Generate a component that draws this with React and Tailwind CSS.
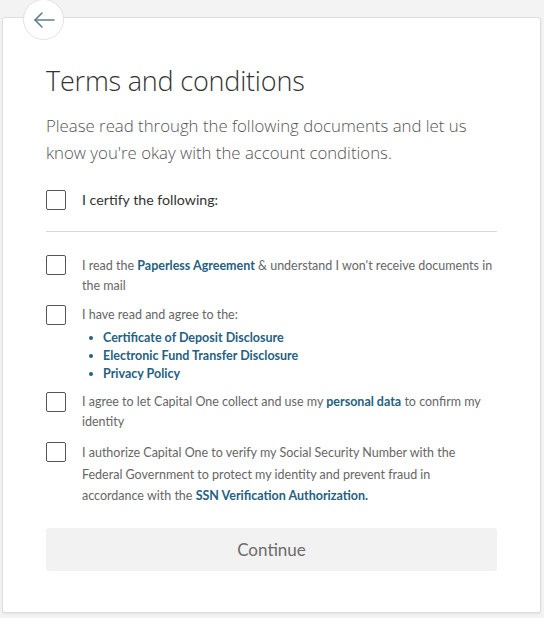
import React from "react";

function Box() {
  return <div className="w-5 h-5 shrink-0 border border-[#555] rounded-[2px] bg-white" />;
}

function L({ children }) {
  return <span className="font-bold text-[#255f82]">{children}</span>;
}

export default function App() {
  return (
    <div className="w-[544px] h-[618px] bg-[#f3f3f3] relative overflow-hidden" style={{ fontFamily: '"Open Sans", "Noto Sans", sans-serif' }}>
      <div className="absolute left-[2px] top-[17px] w-[539px] h-[596px] bg-white border border-[#dedede] rounded-[3px] shadow-[0_1px_2px_rgba(0,0,0,0.08)]">
        <div className="pl-[43px] pr-[43px] pt-[45px]">
          <h1 className="text-[27px] leading-[36px] font-light text-[#333] tracking-[-0.2px]">Terms and conditions</h1>
          <p className="mt-[13px] text-[16.8px] leading-[27px] font-light text-[#555]">
            Please read through the following documents and let us know you're okay with the account conditions.
          </p>
          <div className="mt-[23px] flex items-center gap-4 pb-[21px] border-b border-[#d9d9d9]" style={{ fontFamily: 'Lato, sans-serif' }}>
            <Box />
            <span className="text-[14.2px] text-[#333]">I certify the following:</span>
          </div>
          <div className="mt-[23px] flex flex-col gap-[10px] text-[12.5px] leading-[20px] text-[#666]" style={{ fontFamily: 'Lato, sans-serif' }}>
            <div className="flex gap-4">
              <Box />
              <p className="mt-[1px] -mb-[1px]">I read the <L>Paperless Agreement</L> &amp; understand I won't receive documents in the mail</p>
            </div>
            <div className="flex gap-4">
              <Box />
              <div>
                <p>I have read and agree to the:</p>
                <ul className="mt-[4px] pl-[7px] leading-[18px]">
                  {["Certificate of Deposit Disclosure", "Electronic Fund Transfer Disclosure", "Privacy Policy"].map((t) => (
                    <li key={t} className="flex items-center gap-[10px]">
                      <span className="w-[4px] h-[4px] rounded-full bg-[#255f82]" />
                      <L>{t}</L>
                    </li>
                  ))}
                </ul>
              </div>
            </div>
            <div className="flex gap-4 -mt-[1px]">
              <Box />
              <p>I agree to let Capital One collect and use my <L>personal data</L> to confirm my identity</p>
            </div>
            <div className="flex gap-4">
              <Box />
              <p className="leading-[21.5px]">I authorize Capital One to verify my Social Security Number with the Federal Government to protect my identity and prevent fraud in<br />accordance with the <L>SSN Verification Authorization.</L></p>
            </div>
          </div>
          <button className="mt-[21px] w-full h-[43px] rounded-[3px] bg-[#f2f2f2] text-[17px] text-[#6b6b6b] flex items-center justify-center" style={{ fontFamily: 'Lato, sans-serif' }}>
            Continue
          </button>
        </div>
      </div>
      <div className="absolute left-[23px] top-[-1px] w-[41px] h-[41px] rounded-full bg-white border border-[#e3e3e3] flex items-center justify-center">
        <svg width="22" height="16" viewBox="0 0 22 16" fill="none" stroke="#5f7f8c" strokeWidth="1.6" strokeLinecap="round" strokeLinejoin="round">
          <path d="M21 8H2" />
          <path d="M9 1L2 8l7 7" />
        </svg>
      </div>
    </div>
  );
}
